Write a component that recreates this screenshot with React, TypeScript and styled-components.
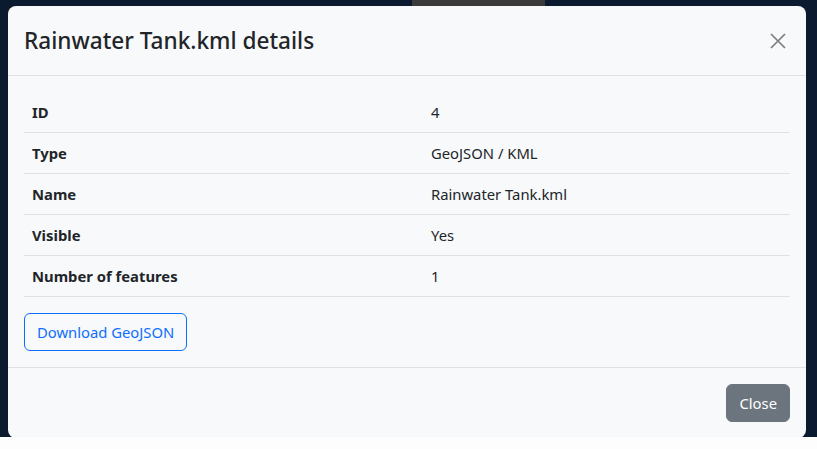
import React, { FC } from 'react'
import styled, { createGlobalStyle } from 'styled-components'

const GlobalStyle = createGlobalStyle`
  html, body {
    margin: 0;
    padding: 0;
    background: #fdfdfd;
    font-family: 'Noto Sans', 'Open Sans', sans-serif;
    color: #212529;
  }
  * { box-sizing: border-box; }
`

const Backdrop = styled.div`
  height: 437px;
  padding: 6px 11px 0 8px;
  background: linear-gradient(90deg, #0b1a2e 0 412px, #3b3b3b 412px 545px, #0b1a2e 545px);
`

const Modal = styled.div`
  height: 432px;
  display: flex;
  flex-direction: column;
  background: #f8f9fa;
  border-radius: 8px;
`

const Header = styled.div`
  display: flex;
  align-items: center;
  justify-content: space-between;
  padding: 16px;
  border-bottom: 1px solid #dee2e6;
`

const Title = styled.h4`
  margin: 0;
  font-size: 22.6px;
  font-weight: 500;
  line-height: 37px;
`

const CloseX = styled.button`
  width: 24px;
  height: 24px;
  padding: 4px;
  border: 0;
  background: transparent;
  color: #7d7e7f;
  cursor: pointer;
  display: flex;
`

const Body = styled.div`
  padding: 16px;
`

const Table = styled.table`
  width: 100%;
  border-collapse: collapse;
  margin-bottom: 16px;
  font-size: 14.8px;
  line-height: 24px;
`

const Cell = styled.td<{ $label?: boolean }>`
  padding: 8px;
  border-bottom: 1px solid #dee2e6;
  font-weight: ${(p) => (p.$label ? 700 : 400)};
  width: ${(p) => (p.$label ? '399px' : 'auto')};
`

const Button = styled.button<{ $variant: 'outline' | 'secondary' }>`
  font-family: inherit;
  font-size: 14.8px;
  line-height: 24px;
  padding: 6px 12px;
  border-radius: 6px;
  border: 1px solid ${(p) => (p.$variant === 'outline' ? '#0d6efd' : '#6c757d')};
  background: ${(p) => (p.$variant === 'outline' ? 'transparent' : '#6c757d')};
  color: ${(p) => (p.$variant === 'outline' ? '#0d6efd' : '#fff')};
  cursor: pointer;
`

const Footer = styled.div`
  display: flex;
  justify-content: flex-end;
  padding: 12px;
  border-top: 1px solid #dee2e6;
  & > button { margin: 4px; }
`

const rows: [string, string][] = [
  ['ID', '4'],
  ['Type', 'GeoJSON / KML'],
  ['Name', 'Rainwater Tank.kml'],
  ['Visible', 'Yes'],
  ['Number of features', '1'],
]

const App: FC = () => (
  <>
    <GlobalStyle />
    <Backdrop>
      <Modal>
        <Header>
          <Title>Rainwater Tank.kml details</Title>
          <CloseX aria-label='Close'>
            <svg width='16' height='16' viewBox='0 0 16 16'>
              <path d='M1 1L15 15M15 1L1 15' stroke='currentColor' strokeWidth='1.7' fill='none' />
            </svg>
          </CloseX>
        </Header>
        <Body>
          <Table>
            <tbody>
              {rows.map(([k, v]) => (
                <tr key={k}>
                  <Cell $label>{k}</Cell>
                  <Cell>{v}</Cell>
                </tr>
              ))}
            </tbody>
          </Table>
          <Button $variant='outline'>Download GeoJSON</Button>
        </Body>
        <Footer>
          <Button $variant='secondary'>Close</Button>
        </Footer>
      </Modal>
    </Backdrop>
  </>
)

export default App
